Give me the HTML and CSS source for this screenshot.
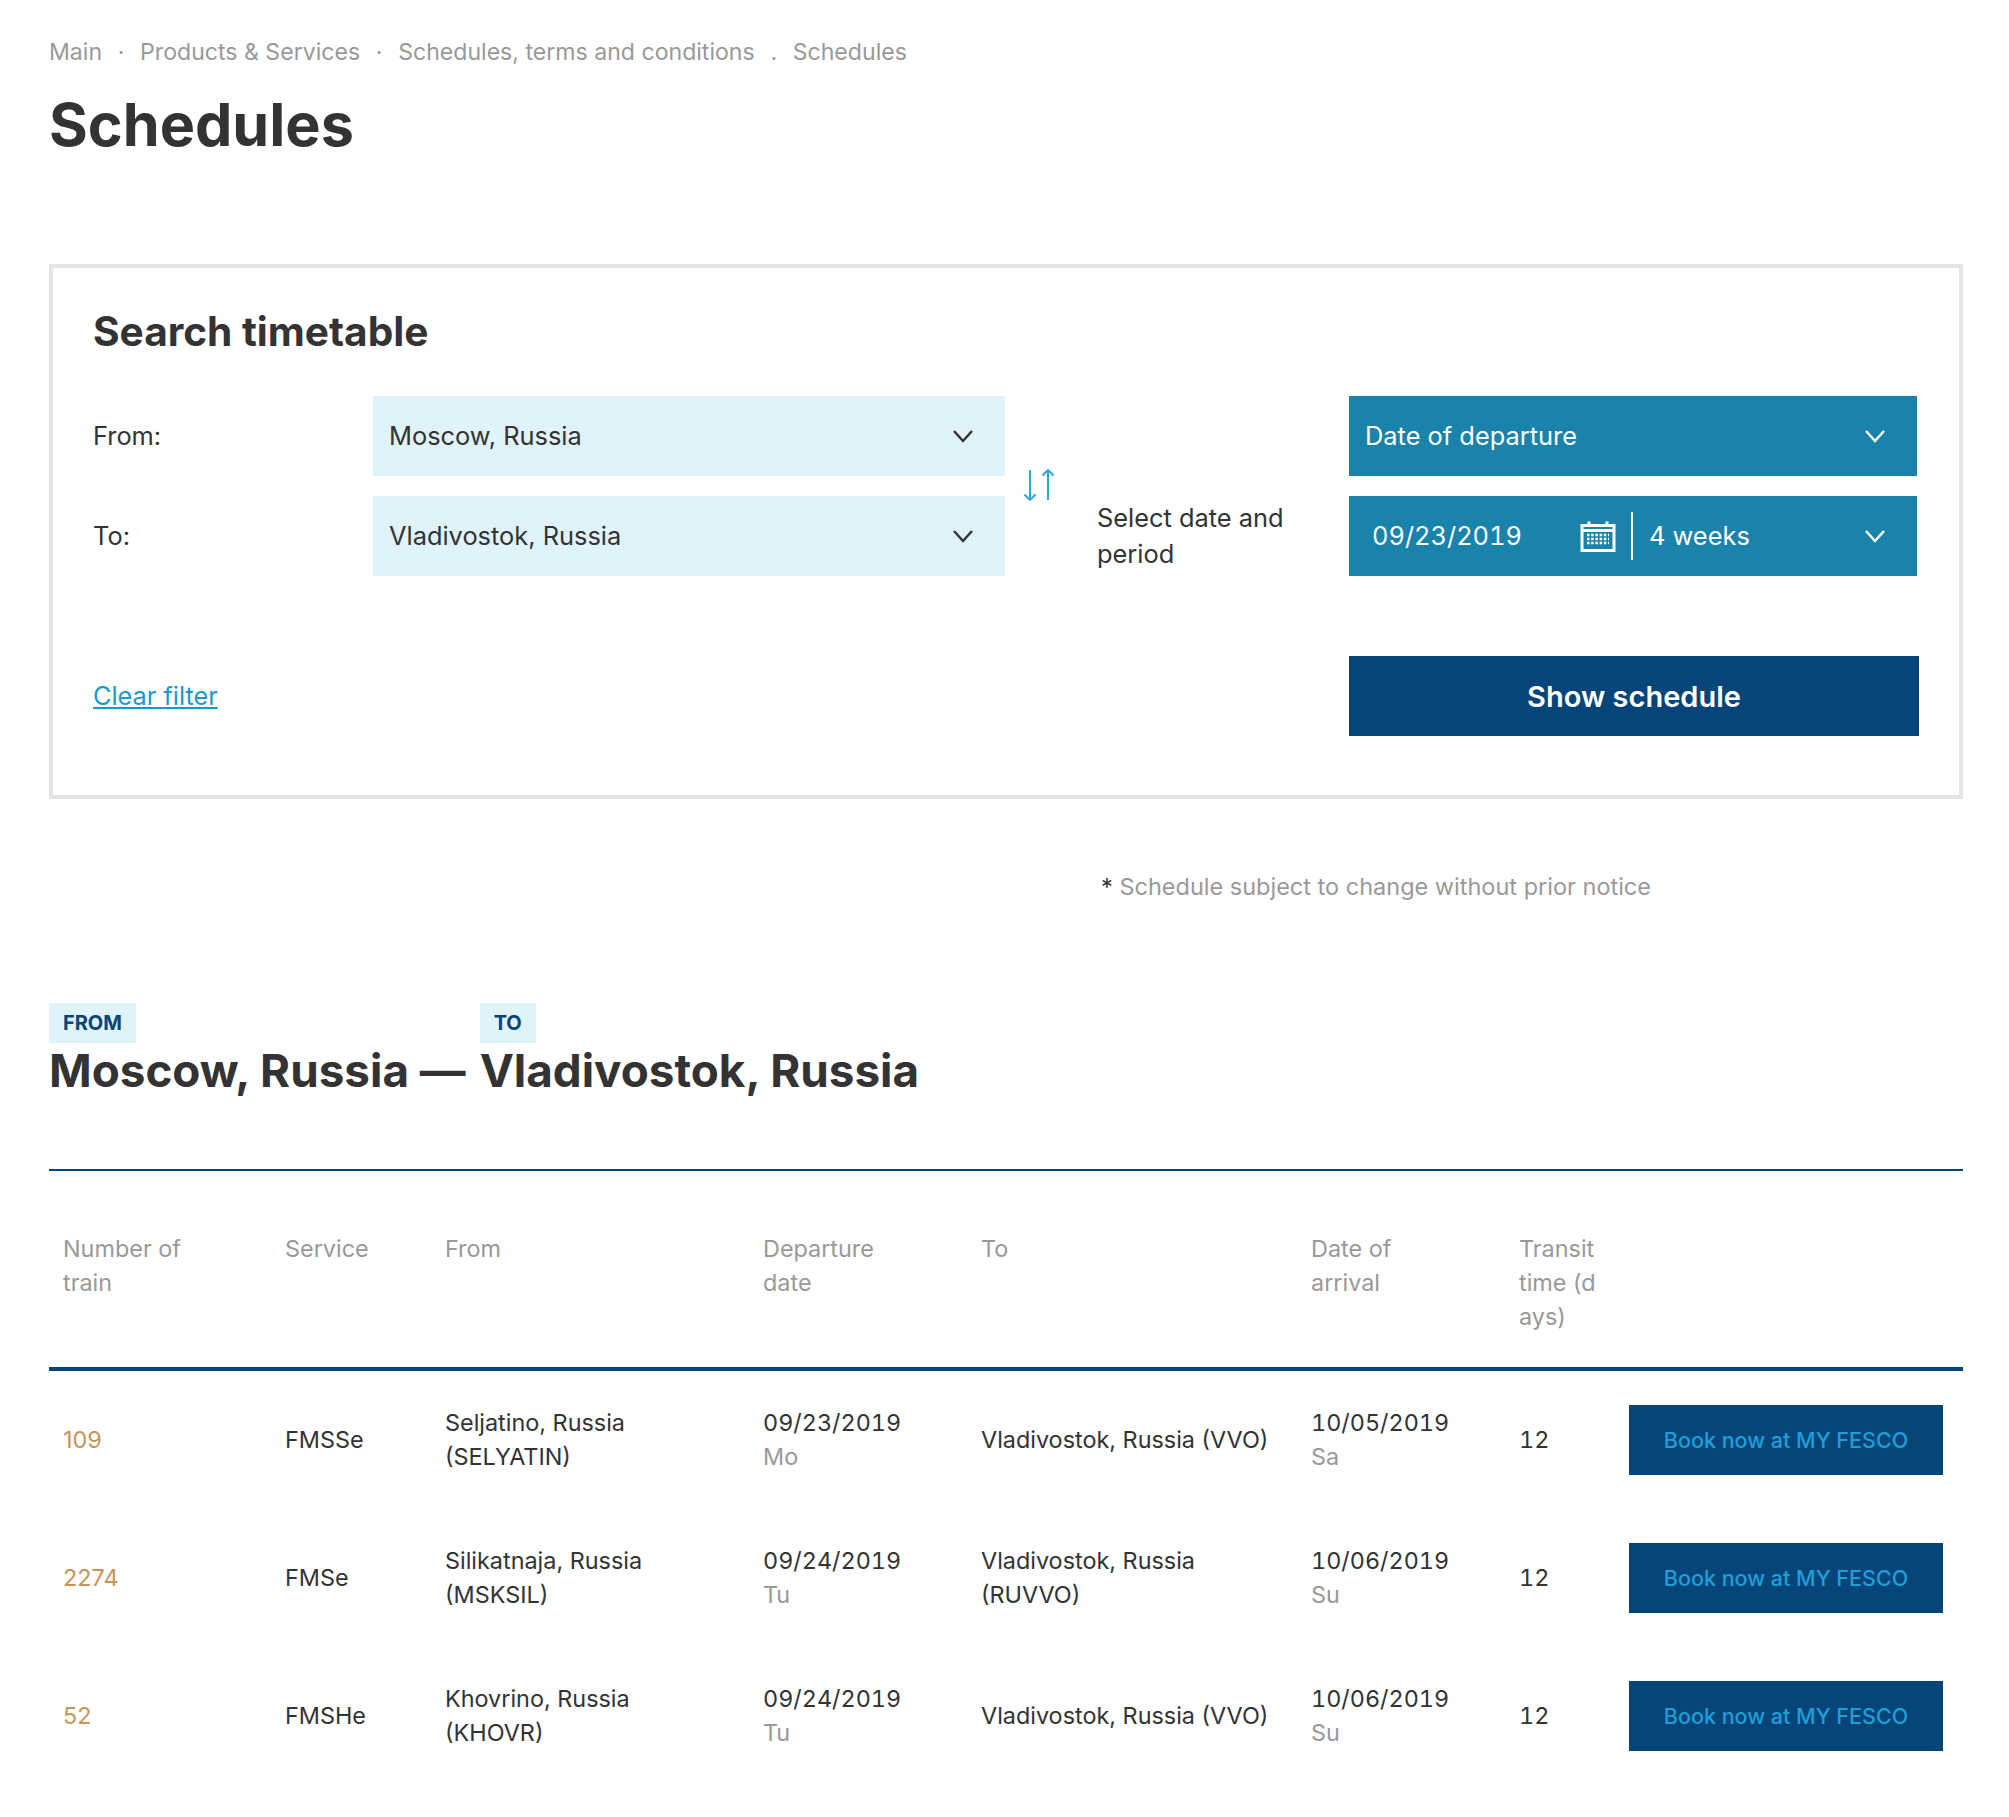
FILE: index.html
```html
<!DOCTYPE html>
<html lang="en">
<head>
<meta charset="utf-8">
<title>Schedules</title>
<link rel="stylesheet" href="styles.css">
</head>
<body>
<main class="page">
  <nav class="crumbs"><span>Main</span><i>·</i><span>Products &amp; Services</span><i>·</i><span>Schedules, terms and conditions</span><i>.</i><span>Schedules</span></nav>
  <h1 class="title">Schedules</h1>

  <section class="search">
    <h2 class="search-title">Search timetable</h2>
    <div class="form">
      <div class="label label-from">From:</div>
      <div class="select select-from"><span>Moscow, Russia</span>
        <svg class="chev" viewBox="0 0 22 14"><path d="M2 2 L11 12 L20 2"/></svg></div>
      <div class="label label-to">To:</div>
      <div class="select select-to"><span>Vladivostok, Russia</span>
        <svg class="chev" viewBox="0 0 22 14"><path d="M2 2 L11 12 L20 2"/></svg></div>
      <svg class="swap" viewBox="0 0 32 32"><path d="M7 1V31M1.500 25.500 7 31l5.500-5.500M25 31V1M19.500 6.500 25 1l5.500 5.500"/></svg>
      <div class="period-label">Select date and period</div>
      <div class="select dark date-type"><span>Date of departure</span>
        <svg class="chev" viewBox="0 0 22 14"><path d="M2 2 L11 12 L20 2"/></svg></div>
      <div class="select dark date-range">
        <span class="date">09/23/2019</span>
        <svg class="cal" viewBox="0 0 36 32"><path class="cal-line" d="M2 5.500H34V30.500H2ZM2 10.500H34M9 1.500V7M27 1.500V7"/><path class="cal-dots" d="M7 15h22M7 19h22M7 23h22"/></svg>
        <span class="divider"></span>
        <span class="weeks">4 weeks</span>
        <svg class="chev" viewBox="0 0 22 14"><path d="M2 2 L11 12 L20 2"/></svg>
      </div>
    </div>
    <div class="actions">
      <a class="clear" href="#">Clear filter</a>
      <button class="show" type="button">Show schedule</button>
    </div>
  </section>

  <p class="note"><b>*</b> Schedule subject to change without prior notice</p>

  <section class="route">
    <div class="route-part"><span class="tag">FROM</span><h2>Moscow, Russia —</h2></div>
    <div class="route-part"><span class="tag">TO</span><h2>Vladivostok, Russia</h2></div>
  </section>

  <table class="grid">
    <colgroup>
      <col class="c1"><col class="c2"><col class="c3"><col class="c4"><col class="c5"><col class="c6"><col class="c7"><col class="c8">
    </colgroup>
    <thead>
      <tr><th>Number of<br>train</th><th>Service</th><th>From</th><th>Departure<br>date</th><th>To</th><th>Date of<br>arrival</th><th class="breaky">Transit time (days)</th><th></th></tr>
    </thead>
    <tbody>
      <tr><td class="num">109</td><td>FMSSe</td><td>Seljatino, Russia<br>(SELYATIN)</td><td><span class="dt">09/23/2019</span><br><span class="day">Mo</span></td><td>Vladivostok, Russia (VVO)</td><td><span class="dt">10/05/2019</span><br><span class="day">Sa</span></td><td class="dt">12</td><td><a class="book" href="#">Book now at MY FESCO</a></td></tr>
      <tr><td class="num">2274</td><td>FMSe</td><td>Silikatnaja, Russia<br>(MSKSIL)</td><td><span class="dt">09/24/2019</span><br><span class="day">Tu</span></td><td>Vladivostok, Russia<br>(RUVVO)</td><td><span class="dt">10/06/2019</span><br><span class="day">Su</span></td><td class="dt">12</td><td><a class="book" href="#">Book now at MY FESCO</a></td></tr>
      <tr><td class="num">52</td><td>FMSHe</td><td>Khovrino, Russia<br>(KHOVR)</td><td><span class="dt">09/24/2019</span><br><span class="day">Tu</span></td><td>Vladivostok, Russia (VVO)</td><td><span class="dt">10/06/2019</span><br><span class="day">Su</span></td><td class="dt">12</td><td><a class="book" href="#">Book now at MY FESCO</a></td></tr>
    </tbody>
  </table>
</main>
</body>
</html>
```

FILE: styles.css
```css
* { box-sizing: border-box; }
html, body { margin: 0; padding: 0; background: #fff; }
body { font-family: "Inter", "Liberation Sans", sans-serif; font-size: 23.400px; line-height: 34px; color: #333; }
.page { padding: 35px 46px 64px 49px; }

.crumbs { display: flex; color: #999; height: 34px; font-size: 23.100px; }
.crumbs i { font-style: normal; width: 38px; text-align: center; }

.title { margin: 17px 0 0; font-size: 59.300px; line-height: 78px; font-weight: 700; color: #333; }

.search { margin-top: 100px; border: 4px solid #e5e5e5; height: 535px; padding: 41px 40px 0; }
.search-title { margin: 0; font-size: 40.600px; line-height: 46px; font-weight: 700; }

.form {
  margin-top: 41px;
  font-size: 25.400px;
  display: grid;
  grid-template-columns: 280px 632px 92px 252px 568px;
  grid-template-rows: 80px 80px;
  row-gap: 20px;
  align-items: center;
}
.label-from { grid-column: 1; grid-row: 1; }
.label-to { grid-column: 1; grid-row: 2; }
.select-from { grid-column: 2; grid-row: 1; }
.select-to { grid-column: 2; grid-row: 2; }
.date-type { grid-column: 5; grid-row: 1; }
.date-range { grid-column: 5; grid-row: 2; }
.swap { grid-column: 3; grid-row: 1 / 3; justify-self: start; margin: 0 0 2px 18px; width: 32px; height: 32px; fill: none; stroke: #2ea6d8; stroke-width: 2; }
.period-label { grid-column: 4; grid-row: 2; line-height: 36px; width: 210px; }

.select { height: 80px; background: #e1f3fa; display: flex; align-items: center; justify-content: space-between; padding: 0 31px 0 16px; }
.select.dark { background: #1983ab; color: #fff; }
.chev { width: 22px; height: 14px; fill: none; stroke: #333; stroke-width: 2.500; flex: none; }
.dark .chev { stroke: #fff; }

.date-range { justify-content: flex-start; padding-left: 23px; }
.date { width: 208px; font-variant-numeric: tabular-nums; }
.cal { width: 36px; height: 32px; fill: none; stroke: #fff; flex: none; }
.cal-line { stroke-width: 3; }
.cal-dots { stroke-width: 2.500; stroke-dasharray: 2.500 1.700; }
.divider { width: 2px; height: 48px; background: #fff; margin: 0 16px 0 15px; flex: none; }
.weeks { flex: 1; }

.actions { margin-top: 80px; display: flex; justify-content: space-between; align-items: center; }
.clear { color: #1b9ac9; font-size: 25.300px; text-decoration: underline; }
.show { width: 570px; height: 80px; border: 0; background: #05457a; color: #fff; font: 600 29px "Inter", "Liberation Sans", sans-serif; }

.note { margin: 71px 0 0 1052px; color: #999; font-size: 23.500px; }
.note b { font-weight: 400; color: #333; }

.route { margin-top: 99px; display: flex; gap: 14px; }
.route-part { display: flex; flex-direction: column; align-items: flex-start; }
.tag { background: #e1f3fa; color: #05457a; font-size: 20px; font-weight: 700; line-height: 40px; padding: 0 14px; }
.route h2 { margin: 0; font-size: 45.800px; line-height: 56px; font-weight: 700; white-space: nowrap; }

.grid { margin-top: 70px; width: 1914px; table-layout: fixed; border-collapse: collapse; }
.c1 { width: 222px; } .c2 { width: 160px; } .c3 { width: 318px; } .c4 { width: 218px; }
.c5 { width: 330px; } .c6 { width: 208px; } .c7 { width: 110px; } .c8 { width: 348px; }
.grid thead tr { border-top: 2px solid #05457a; border-bottom: 4px solid #05457a; height: 199px; }
.grid th { font-weight: 400; color: #999; text-align: left; vertical-align: top; padding: 61px 14px 0; }
.breaky { word-break: break-all; }
.grid td { padding: 34px 14px; height: 138px; }
.dt { font-variant-numeric: tabular-nums; }
.num { color: #c6955a; }
.day { color: #999; }
.book { display: flex; align-items: center; justify-content: center; width: 314px; height: 70px; background: #05457a; color: #1f9fd6; text-decoration: none; font-size: 21.500px; font-weight: 500; }
```
